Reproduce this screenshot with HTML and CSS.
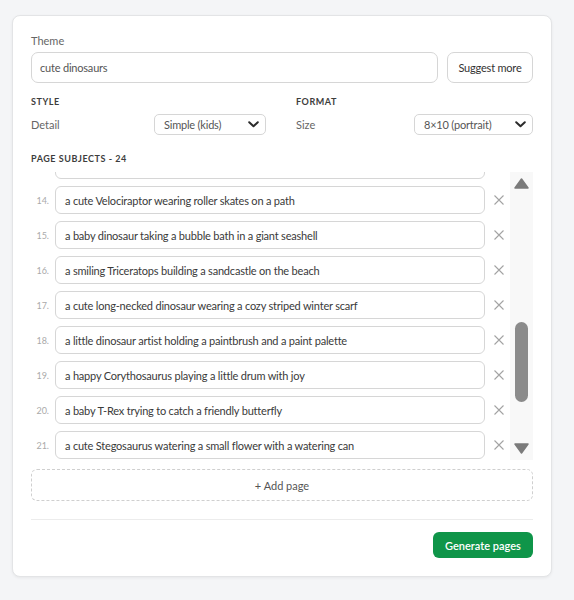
FILE: index.html
```html
<!DOCTYPE html>
<html lang="en">
<head>
    <meta charset="UTF-8">
    <meta name="viewport" content="width=device-width, initial-scale=1.0">
    <title>Coloring Book Pages</title>
    <link rel="stylesheet" href="styles.css">
</head>
<body>
    <div class="card">
        <div class="field-label">Theme</div>
        <div class="theme-row">
            <div class="text-input theme-input">cute dinosaurs</div>
            <button class="btn-outline">Suggest more</button>
        </div>

        <div class="settings">
            <div class="setting-group">
                <div class="section-title">Style</div>
                <div class="setting-row">
                    <span class="setting-name">Detail</span>
                    <div class="select select-detail">
                        <span>Simple (kids)</span>
                        <svg width="11" height="7" viewBox="0 0 11 7"><path d="M1.2 1.2 L5.5 5.3 L9.8 1.2" fill="none" stroke="#2b2b2b" stroke-width="2" stroke-linecap="round" stroke-linejoin="round"/></svg>
                    </div>
                </div>
            </div>
            <div class="setting-group">
                <div class="section-title">Format</div>
                <div class="setting-row">
                    <span class="setting-name">Size</span>
                    <div class="select select-size">
                        <span>8×10 (portrait)</span>
                        <svg width="11" height="7" viewBox="0 0 11 7"><path d="M1.2 1.2 L5.5 5.3 L9.8 1.2" fill="none" stroke="#2b2b2b" stroke-width="2" stroke-linecap="round" stroke-linejoin="round"/></svg>
                    </div>
                </div>
            </div>
        </div>

        <div class="section-title subjects-title">Page subjects - 24</div>

        <div class="subjects">
            <div class="subject-list">
                <!-- row 13 is scrolled mostly out of view -->
                <div class="subject first">
                    <span class="num"></span>
                    <div class="text-input"></div>
                    <span class="remove"></span>
                </div>
                <div class="subject">
                    <span class="num">14.</span>
                    <div class="text-input">a cute Velociraptor wearing roller skates on a path</div>
                    <span class="remove"><svg width="10" height="10" viewBox="0 0 10 10"><path d="M0.5 0.5 L9.5 9.5 M9.5 0.5 L0.5 9.5" stroke="#a3a3a3" stroke-width="1.1"/></svg></span>
                </div>
                <div class="subject">
                    <span class="num">15.</span>
                    <div class="text-input">a baby dinosaur taking a bubble bath in a giant seashell</div>
                    <span class="remove"><svg width="10" height="10" viewBox="0 0 10 10"><path d="M0.5 0.5 L9.5 9.5 M9.5 0.5 L0.5 9.5" stroke="#a3a3a3" stroke-width="1.1"/></svg></span>
                </div>
                <div class="subject">
                    <span class="num">16.</span>
                    <div class="text-input">a smiling Triceratops building a sandcastle on the beach</div>
                    <span class="remove"><svg width="10" height="10" viewBox="0 0 10 10"><path d="M0.5 0.5 L9.5 9.5 M9.5 0.5 L0.5 9.5" stroke="#a3a3a3" stroke-width="1.1"/></svg></span>
                </div>
                <div class="subject">
                    <span class="num">17.</span>
                    <div class="text-input">a cute long-necked dinosaur wearing a cozy striped winter scarf</div>
                    <span class="remove"><svg width="10" height="10" viewBox="0 0 10 10"><path d="M0.5 0.5 L9.5 9.5 M9.5 0.5 L0.5 9.5" stroke="#a3a3a3" stroke-width="1.1"/></svg></span>
                </div>
                <div class="subject">
                    <span class="num">18.</span>
                    <div class="text-input">a little dinosaur artist holding a paintbrush and a paint palette</div>
                    <span class="remove"><svg width="10" height="10" viewBox="0 0 10 10"><path d="M0.5 0.5 L9.5 9.5 M9.5 0.5 L0.5 9.5" stroke="#a3a3a3" stroke-width="1.1"/></svg></span>
                </div>
                <div class="subject">
                    <span class="num">19.</span>
                    <div class="text-input">a happy Corythosaurus playing a little drum with joy</div>
                    <span class="remove"><svg width="10" height="10" viewBox="0 0 10 10"><path d="M0.5 0.5 L9.5 9.5 M9.5 0.5 L0.5 9.5" stroke="#a3a3a3" stroke-width="1.1"/></svg></span>
                </div>
                <div class="subject">
                    <span class="num">20.</span>
                    <div class="text-input">a baby T-Rex trying to catch a friendly butterfly</div>
                    <span class="remove"><svg width="10" height="10" viewBox="0 0 10 10"><path d="M0.5 0.5 L9.5 9.5 M9.5 0.5 L0.5 9.5" stroke="#a3a3a3" stroke-width="1.1"/></svg></span>
                </div>
                <div class="subject">
                    <span class="num">21.</span>
                    <div class="text-input">a cute Stegosaurus watering a small flower with a watering can</div>
                    <span class="remove"><svg width="10" height="10" viewBox="0 0 10 10"><path d="M0.5 0.5 L9.5 9.5 M9.5 0.5 L0.5 9.5" stroke="#a3a3a3" stroke-width="1.1"/></svg></span>
                </div>
            </div>
            <div class="scrollbar">
                <svg class="arrow-up" width="15" height="11" viewBox="0 0 15 11"><path d="M7.5 1 L14 10 L1 10 Z" fill="#7b7b7b" stroke="#7b7b7b" stroke-width="1.5" stroke-linejoin="round"/></svg>
                <div class="thumb"></div>
                <svg class="arrow-down" width="15" height="11" viewBox="0 0 15 11"><path d="M1 1 L14 1 L7.5 10 Z" fill="#7b7b7b" stroke="#7b7b7b" stroke-width="1.5" stroke-linejoin="round"/></svg>
            </div>
        </div>

        <div class="add-page">+ Add page</div>

        <div class="divider"></div>

        <div class="actions">
            <button class="btn-primary">Generate pages</button>
        </div>
    </div>
</body>
</html>
```

FILE: styles.css
```css
body {
    margin: 0;
    padding: 15px 12px;
    background-color: #f4f5f7;
    font-family: Lato, "Liberation Sans", sans-serif;
    color: #333;
}
.card {
    width: 502px;
    background: white;
    border: 1px solid #e3e4e6;
    border-radius: 8px;
    padding: 18px 18px 18px 18px;
    box-shadow: 0 1px 3px rgba(0, 0, 0, 0.06);
}
.field-label {
    font-size: 11px;
    line-height: 14px;
    color: #666;
    margin-bottom: 4px;
}
.theme-row {
    display: flex;
    gap: 9px;
    height: 31px;
}
.text-input {
    display: flex;
    align-items: center;
    box-sizing: border-box;
    border: 1px solid #d6d6d6;
    border-radius: 6px;
    padding: 0 9px;
    font-size: 11px;
    letter-spacing: -0.2px;
    color: #3a3a3a;
    background: white;
    white-space: nowrap;
    overflow: hidden;
}
.theme-input {
    flex: 1;
    border-radius: 7px;
    padding-left: 8px;
    color: #555;
}
.btn-outline {
    width: 86px;
    background: white;
    border: 1px solid #d6d6d6;
    border-radius: 7px;
    font-family: inherit;
    font-size: 11px;
    letter-spacing: -0.2px;
    color: #333;
    padding: 0;
}
.settings {
    display: grid;
    grid-template-columns: 235px 237px;
    gap: 30px;
    margin-top: 14px;
}
.section-title {
    font-size: 9px;
    line-height: 10px;
    font-weight: 700;
    letter-spacing: 0.55px;
    text-transform: uppercase;
    color: #3d3d3d;
}
.setting-row {
    display: flex;
    justify-content: space-between;
    align-items: center;
    margin-top: 7px;
}
.setting-name {
    font-size: 11px;
    color: #666;
}
.select {
    display: flex;
    align-items: center;
    justify-content: space-between;
    box-sizing: border-box;
    height: 21px;
    border: 1px solid #d6d6d6;
    border-radius: 5px;
    padding: 0 6px 0 9px;
    font-size: 11px;
    letter-spacing: -0.2px;
    color: #555;
}
.select-detail {
    width: 112px;
}
.select-size {
    width: 119px;
}
.subjects-title {
    margin-top: 19px;
}
.subjects {
    display: flex;
    margin-top: 8px;
    height: 288px;
}
.subject-list {
    flex: 1;
    overflow: hidden;
    display: flex;
    flex-direction: column;
    gap: 7px;
}
.subject {
    display: flex;
    align-items: center;
    flex-shrink: 0;
    height: 28px;
}
.subject.first {
    margin-top: -21px;
}
.subject .num {
    width: 18px;
    margin-right: 6px;
    text-align: right;
    font-size: 9px;
    color: #aaa;
}
.subject .text-input {
    flex: 1;
    height: 28px;
}
.remove {
    width: 25px;
    padding-left: 2px;
    box-sizing: border-box;
    display: flex;
    justify-content: center;
    align-items: center;
}
.remove svg {
    display: block;
}
.scrollbar {
    width: 23px;
    background: #f8f8f8;
    display: flex;
    flex-direction: column;
    align-items: center;
}
.scrollbar svg {
    display: block;
}
.arrow-up {
    margin-top: 6px;
}
.thumb {
    width: 13px;
    height: 80px;
    margin-top: 133px;
    border-radius: 7px;
    background: #8b8b8b;
}
.arrow-down {
    margin-top: 41px;
}
.add-page {
    margin-top: 9px;
    height: 32px;
    box-sizing: border-box;
    border: 1px dashed #cfcfcf;
    border-radius: 6px;
    display: flex;
    align-items: center;
    justify-content: center;
    font-size: 11px;
    color: #555;
}
.divider {
    margin-top: 18px;
    height: 1px;
    background: #ececec;
}
.actions {
    display: flex;
    justify-content: flex-end;
    margin-top: 12px;
}
.btn-primary {
    height: 26px;
    width: 100px;
    background-color: #0f9549;
    color: white;
    border: none;
    border-radius: 6px;
    font-family: inherit;
    font-size: 11px;
    font-weight: 600;
    padding: 0;
}
```
